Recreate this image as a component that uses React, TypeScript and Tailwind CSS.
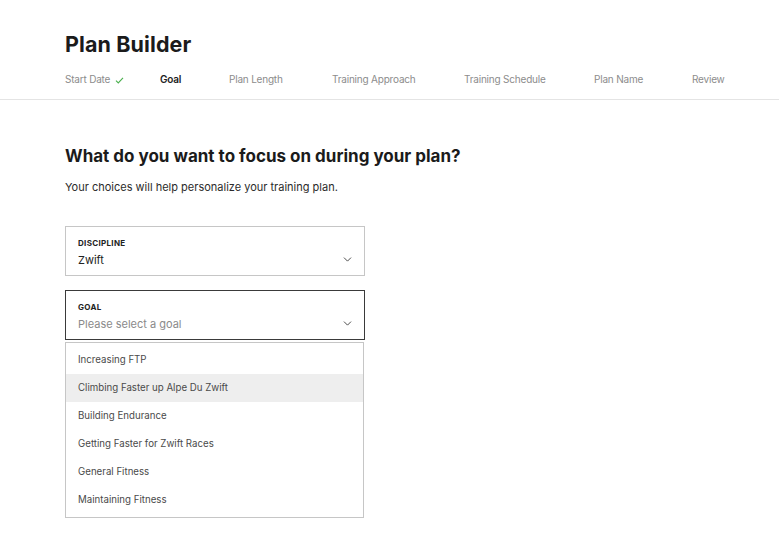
import { ChevronDown } from "lucide-react"

const steps = [
  { label: "Start Date", w: "w-[95px]", done: true },
  { label: "Goal", w: "w-[69px]", active: true },
  { label: "Plan Length", w: "w-[103px]" },
  { label: "Training Approach", w: "w-[132px]" },
  { label: "Training Schedule", w: "w-[130px]" },
  { label: "Plan Name", w: "w-[98px]" },
  { label: "Review", w: "w-auto" },
]

const goals = [
  "Increasing FTP",
  "Climbing Faster up Alpe Du Zwift",
  "Building Endurance",
  "Getting Faster for Zwift Races",
  "General Fitness",
  "Maintaining Fitness",
]

function SelectBox({ label, value, placeholder, focused }: { label: string; value?: string; placeholder?: string; focused?: boolean }) {
  return (
    <div
      className={`flex h-[50px] w-[300px] items-center justify-between border pl-3 pr-[10px] ${
        focused ? "border-[#3a3a3a]" : "border-[#c6c6c6]"
      }`}
    >
      <div className="flex flex-col pt-[2px]">
        <span className="text-[8px] font-bold uppercase leading-[10px] tracking-[0.04em] text-[#222]">{label}</span>
        <span className={`mt-[5px] text-[11px] leading-[14px] ${value ? "text-[#222]" : "text-[#8a8a8a]"}`}>
          {value ?? placeholder}
        </span>
      </div>
      <ChevronDown className="mt-[16px] size-[13px] text-[#333]" strokeWidth={1.6} />
    </div>
  )
}

export default function App() {
  return (
    <div className="min-h-screen bg-white font-['Inter',sans-serif] text-[#1b1b1b]">
      {/* Header with step tabs */}
      <header className="border-b border-[#e4e4e4] px-[65px] pt-[31px]">
        <h1 className="text-[21.5px] font-bold leading-[26px] tracking-[0.005em]">Plan Builder</h1>
        <nav className="flex whitespace-nowrap pb-[13px] pt-[16px] text-[10px] leading-[13px] tracking-[-0.02em]">
          {steps.map((s) => (
            <span key={s.label} className={`shrink-0 ${s.w}`}>
              <span className={`relative ${s.active ? "font-semibold text-[#222]" : "text-[#8c8c8c]"}`}>
                {s.label}
                {s.done && (
                  <svg
                    viewBox="0 0 10 8"
                    className="absolute left-[calc(100%+5px)] top-[4px] h-[7px] w-[9px]"
                    fill="none"
                    stroke="#4cb050"
                    strokeWidth={1.3}
                  >
                    <path d="M1 4.2 3.6 6.8 9 1" />
                  </svg>
                )}
              </span>
            </span>
          ))}
        </nav>
      </header>

      <main className="px-[65px] pt-[46px]">
        <h2 className="text-[17px] font-bold leading-[20px]">What do you want to focus on during your plan?</h2>
        <p className="mt-[14px] text-[11px] leading-[14px] text-[#2b2b2b]">Your choices will help personalize your training plan.</p>

        <div className="mt-[32px] flex flex-col gap-[14px]">
          <SelectBox label="Discipline" value="Zwift" />
          <div>
            <SelectBox label="Goal" placeholder="Please select a goal" focused />
            <ul className="mt-[2px] w-[299px] border border-[#c6c6c6] py-[3px]">
              {goals.map((g, i) => (
                <li
                  key={g}
                  className={`flex h-[28px] items-center pl-3 text-[9.7px] text-[#4a4a4a] ${i === 1 ? "bg-[#eeeeee]" : ""}`}
                >
                  {g}
                </li>
              ))}
            </ul>
          </div>
        </div>
      </main>
    </div>
  )
}
